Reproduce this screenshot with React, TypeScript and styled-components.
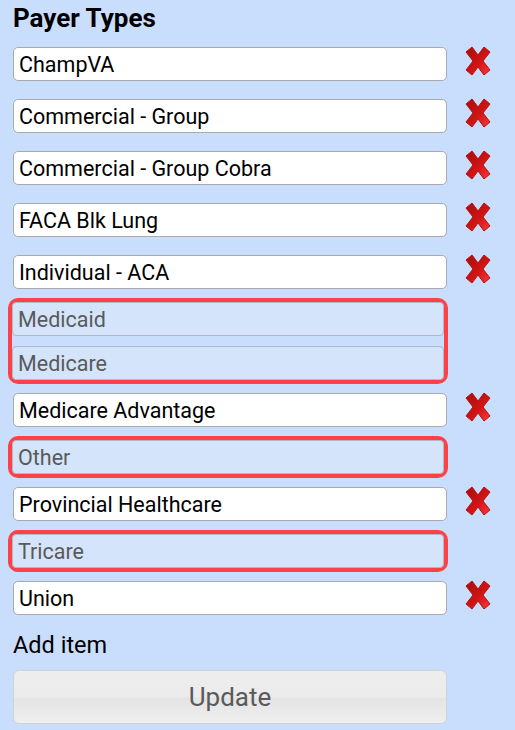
import React from "react";
import styled, { createGlobalStyle } from "styled-components";

interface PayerType {
  name: string;
  locked?: boolean;
}

const payerGroups: PayerType[][] = [
  [{ name: "ChampVA" }],
  [{ name: "Commercial - Group" }],
  [{ name: "Commercial - Group Cobra" }],
  [{ name: "FACA Blk Lung" }],
  [{ name: "Individual - ACA" }],
  [
    { name: "Medicaid", locked: true },
    { name: "Medicare", locked: true },
  ],
  [{ name: "Medicare Advantage" }],
  [{ name: "Other", locked: true }],
  [{ name: "Provincial Healthcare" }],
  [{ name: "Tricare", locked: true }],
  [{ name: "Union" }],
];

const GlobalStyle = createGlobalStyle`
  html, body {
    margin: 0;
    padding: 0;
    background: #c8defc;
  }
  body {
    font-family: Roboto, "Liberation Sans", sans-serif;
    color: #000;
  }
`;

const Page = styled.div`
  padding: 0 8px 8px 8px;
  width: 515px;
  box-sizing: border-box;
`;

const Title = styled.h2`
  margin: 0 0 0 5px;
  padding-top: 3px;
  height: 35px;
  font-size: 26px;
  font-weight: 700;
  line-height: 30px;
`;

const List = styled.div`
  display: flex;
  flex-direction: column;
`;

const Row = styled.div`
  display: flex;
  align-items: center;
  padding: 9px 0 9px 5px;
`;

const LockedGroup = styled.div`
  display: flex;
  flex-direction: column;
  gap: 10px;
  width: 440px;
  box-sizing: border-box;
  border: 4px solid #fc4148;
  border-radius: 10px;
`;

const ItemInput = styled.input<{ $locked?: boolean }>`
  box-sizing: border-box;
  width: ${(p) => (p.$locked ? "432px" : "434px")};
  height: 34px;
  padding: 0 5px;
  margin: 0;
  font-family: Roboto, "Liberation Sans", sans-serif;
  font-size: 21.5px;
  color: ${(p) => (p.$locked ? "#5a5a5a" : "#000")};
  background: ${(p) => (p.$locked ? "#d4e4fa" : "#fff")};
  border: 1px solid ${(p) => (p.$locked ? "#b4b9c0" : "#aaa")};
  border-radius: ${(p) => (p.$locked ? "4px" : "5px")};
  outline: none;
`;

const DeleteButton = styled.button`
  display: flex;
  align-items: center;
  justify-content: center;
  margin: -6px 0 0 14px;
  padding: 0;
  width: 34px;
  height: 32px;
  border: none;
  background: none;
  cursor: pointer;
`;

const AddLabel = styled.div`
  margin: 7px 0 0 5px;
  font-size: 23.5px;
  line-height: 28px;
  height: 28px;
`;

const UpdateButton = styled.button`
  display: block;
  margin: 11px 0 0 5px;
  width: 434px;
  height: 54px;
  box-sizing: border-box;
  border: 1px solid #d2d2d2;
  border-radius: 6px;
  background: linear-gradient(#eeeeee 0%, #ebebeb 50%, #e4e4e4 52%, #efefef 100%);
  font-family: Roboto, "Liberation Sans", sans-serif;
  font-size: 26px;
  color: #5a5a5a;
  cursor: pointer;
`;

const CrossIcon = () => (
  <svg width="32" height="30" viewBox="0 0 32 30">
    <defs>
      <linearGradient id="xg" x1="0" y1="0" x2="1" y2="1">
        <stop offset="0" stopColor="#a80d0d" />
        <stop offset="0.55" stopColor="#d01414" />
        <stop offset="1" stopColor="#ff3a3a" />
      </linearGradient>
    </defs>
    <path
      d="M4 6 L10 1 L16 9 L22 1 L28 6 L21 15 L28 24 L22 29 L16 21 L10 29 L4 24 L11 15 Z"
      fill="url(#xg)"
      stroke="#b81111"
      strokeWidth="1"
      strokeLinejoin="round"
    />
  </svg>
);

const App = () => {
  return (
    <Page>
      <GlobalStyle />
      <Title>Payer Types</Title>
      <List>
        {payerGroups.map((group) =>
          group[0].locked ? (
            <LockedGroup key={group[0].name}>
              {group.map((item) => (
                <ItemInput key={item.name} $locked value={item.name} disabled readOnly />
              ))}
            </LockedGroup>
          ) : (
            <Row key={group[0].name}>
              <ItemInput value={group[0].name} readOnly />
              <DeleteButton aria-label="Remove">
                <CrossIcon />
              </DeleteButton>
            </Row>
          )
        )}
      </List>
      <AddLabel>Add item</AddLabel>
      <UpdateButton>Update</UpdateButton>
    </Page>
  );
};

export default App;
